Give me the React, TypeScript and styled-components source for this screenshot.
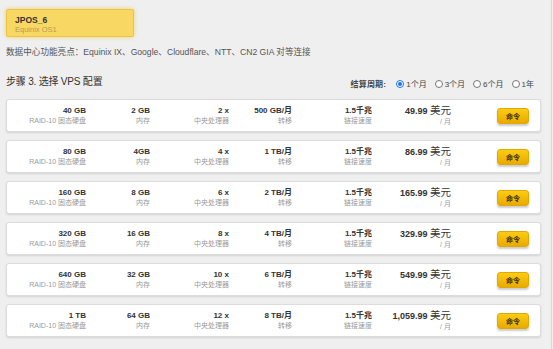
import React from "react";
import styled, { createGlobalStyle } from "styled-components";

const Global = createGlobalStyle`
  html, body { margin: 0; padding: 0; background: #efefef; }
  body { font-family: "Liberation Sans", Arial, "Noto Sans CJK SC", sans-serif; color: #333; }
  * { box-sizing: border-box; }
`;

const Page = styled.div`
  width: 552px;
  height: 349px;
  overflow: hidden;
  border-right: 1px solid #d9d9d9;
  padding: 9px 0 0 6px;
`;

const DcBox = styled.div`
  width: 128px;
  height: 28px;
  background: #f8d862;
  border: 1px solid #ebc446;
  border-radius: 2px;
  box-shadow: 0 0 4px rgba(240, 200, 60, 0.7);
  padding: 5px 0 0 8px;
  display: flex;
  flex-direction: column;
`;

const DcName = styled.div`
  font-size: 8.5px;
  font-weight: bold;
  line-height: 10px;
  color: #333;
`;

const DcSub = styled.div`
  font-size: 7.5px;
  line-height: 9px;
  color: #b49d55;
`;

const Features = styled.div`
  margin-top: 10px;
  font-size: 8.6px;
  line-height: 10px;
  color: #555;
`;

const Header = styled.div`
  margin-top: 18px;
  width: 535px;
  display: flex;
  justify-content: space-between;
  align-items: flex-end;
`;

const Title = styled.div`
  font-size: 10px;
  line-height: 14px;
  color: #333;
  letter-spacing: -0.2px;
`;

const Billing = styled.div`
  display: flex;
  align-items: center;
  font-size: 8px;
  color: #444;
  margin-right: 7px;
`;

const BillingLabel = styled.span`
  font-weight: bold;
  margin-right: 10px;
  letter-spacing: 0.2px;
`;

const RadioItem = styled.label<{ $first?: boolean }>`
  display: flex;
  align-items: center;
  margin-left: ${(p) => (p.$first ? "0" : "8px")};
`;

const RadioDot = styled.span<{ $on?: boolean }>`
  width: 8px;
  height: 8px;
  border-radius: 50%;
  border: 1px solid ${(p) => (p.$on ? "#1a73e8" : "#777")};
  background: #fff;
  margin-right: 2px;
  display: inline-flex;
  align-items: center;
  justify-content: center;
  &::after {
    content: "";
    width: 4px;
    height: 4px;
    border-radius: 50%;
    background: ${(p) => (p.$on ? "#1a73e8" : "transparent")};
  }
`;

const List = styled.div`
  margin-top: 10px;
  display: flex;
  flex-direction: column;
  gap: 8px;
  width: 535px;
`;

const Card = styled.div`
  height: 33px;
  background: #fff;
  border: 1px solid #dcdcdc;
  border-radius: 3px;
  box-shadow: 0 1px 2px rgba(0, 0, 0, 0.12);
  display: grid;
  grid-template-columns: 79px 64px 79px 63px 80px 79px 1fr;
  align-items: center;
  padding-right: 11px;
`;

const Cell = styled.div`
  text-align: right;
  display: flex;
  flex-direction: column;
  align-items: flex-end;
`;

const Value = styled.div`
  font-size: 8px;
  font-weight: bold;
  line-height: 10px;
  color: #333;
`;

const Label = styled.div`
  font-size: 7px;
  line-height: 10px;
  color: #9a9a9a;
`;

const Price = styled.div`
  font-size: 9px;
  font-weight: bold;
  line-height: 11px;
  color: #333;
`;

const Currency = styled.span`
  font-size: 10.5px;
  font-weight: normal;
`;

const ButtonCell = styled.div`
  display: flex;
  justify-content: flex-end;
`;

const OrderButton = styled.button`
  width: 32px;
  height: 16px;
  padding: 0;
  border: 1px solid #e0a800;
  border-radius: 3px;
  background: linear-gradient(#fbcc12, #e9aa00);
  box-shadow: 0 2px 2px rgba(0, 0, 0, 0.2);
  font-family: "Liberation Sans", "Noto Sans CJK SC", sans-serif;
  font-size: 7px;
  font-weight: bold;
  color: #3a2a00;
`;

const plans = [
  ["40 GB", "2 GB", "2 x", "500 GB/月", "49.99"],
  ["80 GB", "4GB", "4 x", "1 TB/月", "86.99"],
  ["160 GB", "8 GB", "6 x", "2 TB/月", "165.99"],
  ["320 GB", "16 GB", "8 x", "4 TB/月", "329.99"],
  ["640 GB", "32 GB", "10 x", "6 TB/月", "549.99"],
  ["1 TB", "64 GB", "12 x", "8 TB/月", "1,059.99"],
];

const periods = ["1个月", "3个月", "6个月", "1年"];

export default function App() {
  return (
    <>
      <Global />
      <Page>
        <DcBox>
          <DcName>JPOS_6</DcName>
          <DcSub>Equinix OS1</DcSub>
        </DcBox>
        <Features>数据中心功能亮点：Equinix IX、Google、Cloudflare、NTT、CN2 GIA 对等连接</Features>
        <Header>
          <Title>步骤 3. 选择 VPS 配置</Title>
          <Billing>
            <BillingLabel>结算周期:</BillingLabel>
            {periods.map((p, i) => (
              <RadioItem key={p} $first={i === 0}>
                <RadioDot $on={i === 0} />
                {p}
              </RadioItem>
            ))}
          </Billing>
        </Header>
        <List>
          {plans.map((pl) => (
            <Card key={pl[0]}>
              <Cell>
                <Value>{pl[0]}</Value>
                <Label>RAID-10 固态硬盘</Label>
              </Cell>
              <Cell>
                <Value>{pl[1]}</Value>
                <Label>内存</Label>
              </Cell>
              <Cell>
                <Value>{pl[2]}</Value>
                <Label>中央处理器</Label>
              </Cell>
              <Cell>
                <Value>{pl[3]}</Value>
                <Label>转移</Label>
              </Cell>
              <Cell>
                <Value>1.5千兆</Value>
                <Label>链接速度</Label>
              </Cell>
              <Cell>
                <Price>
                  {pl[4]} <Currency>美元</Currency>
                </Price>
                <Label>/ 月</Label>
              </Cell>
              <ButtonCell>
                <OrderButton>命令</OrderButton>
              </ButtonCell>
            </Card>
          ))}
        </List>
      </Page>
    </>
  );
}
